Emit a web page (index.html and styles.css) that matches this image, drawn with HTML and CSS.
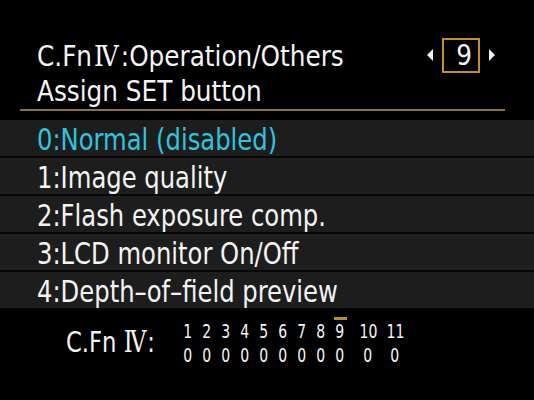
FILE: index.html
```html
<!DOCTYPE html>
<html lang="en">
<head>
  <meta charset="UTF-8">
  <title>C.Fn IV</title>
  <link rel="stylesheet" href="styles.css">
</head>
<body>

<div class="screen">
  <div class="head">
    <div class="head-text">
      <div class="line">C.Fn<span class="rn">Ⅳ</span>:Operation/Others</div>
      <div class="line">Assign SET button</div>
    </div>
    <div class="pager">
      <span class="arr arr-left"></span>
      <span class="num">9</span>
      <span class="arr arr-right"></span>
    </div>
  </div>
  <div class="rule"></div>

  <ul class="opts">
    <li class="sel"><span class="t">0:Normal (disabled)</span></li>
    <li><span class="t">1:Image quality</span></li>
    <li><span class="t">2:Flash exposure comp.</span></li>
    <li><span class="t">3:LCD monitor On/Off</span></li>
    <li><span class="t">4:Depth–of–field preview</span></li>
  </ul>

  <div class="summary">
    <span class="lbl"><span class="t">C.Fn <span class="rn">Ⅳ</span>:</span></span>
    <div class="cols">
      <div class="col"><span>1</span><span>0</span></div>
      <div class="col"><span>2</span><span>0</span></div>
      <div class="col"><span>3</span><span>0</span></div>
      <div class="col"><span>4</span><span>0</span></div>
      <div class="col"><span>5</span><span>0</span></div>
      <div class="col"><span>6</span><span>0</span></div>
      <div class="col"><span>7</span><span>0</span></div>
      <div class="col"><span>8</span><span>0</span></div>
      <div class="col cur"><span>9</span><span>0</span></div>
      <div class="col wide ten"><span>10</span><span>0</span></div>
      <div class="col wide"><span>11</span><span>0</span></div>
    </div>
  </div>
</div>

</body>
</html>
```

FILE: styles.css
```css
body {
  margin: 0;
  background: #000;
  font-family: "DejaVu Sans Condensed", "DejaVu Sans", sans-serif;
  color: #f4f4f4;
}
.screen {
  width: 534px;
  height: 400px;
  overflow: hidden;
  background: #000;
}
.rn {
  font-family: "DejaVu Serif Condensed", "DejaVu Serif", serif;
  margin: 0 2px;
}
.t {
  display: inline-block;
  white-space: nowrap;
  transform: scaleX(0.87);
  transform-origin: left center;
}
.head {
  display: flex;
  justify-content: space-between;
  padding: 38.5px 0 0 37px;
}
.line {
  font-size: 27.5px;
  line-height: 35px;
}
.pager {
  display: flex;
  align-items: center;
  height: 35px;
  margin: -1px 39px 0 0;
}
.num {
  box-sizing: border-box;
  width: 38px;
  height: 35px;
  border: 2px solid #c4921c;
  text-align: right;
  padding-right: 6px;
  font-size: 27.5px;
  line-height: 31px;
  margin: 0 9px;
}
.arr {
  width: 0;
  height: 0;
  border-top: 6.5px solid transparent;
  border-bottom: 6.5px solid transparent;
}
.arr-left {
  border-right: 6px solid #f4f4f4;
}
.arr-right {
  border-left: 6px solid #f4f4f4;
}
.rule {
  height: 2px;
  margin: 0 29px 0 20px;
  background: #8a7438;
}
.opts {
  list-style: none;
  margin: 9px 0 0 0;
  padding: 0;
}
.opts li {
  height: 33px;
  padding: 3px 0 0 37px;
  line-height: 33px;
  font-size: 31px;
  background: #1d1d1d;
  border-bottom: 2px solid #060606;
}
.opts li.sel {
  color: #2fc4de;
}
.summary {
  display: flex;
  align-items: flex-start;
  padding: 10.5px 0 0 66px;
}
.lbl {
  flex-shrink: 0;
  width: 116px;
  margin-top: 6.5px;
  font-size: 29px;
  line-height: 30px;
}
.lbl .rn {
  margin: 0 1px 0 0;
}
.cols {
  display: flex;
  gap: 7px;
}
.col {
  position: relative;
  display: flex;
  flex-direction: column;
  align-items: center;
  width: 12px;
  font-size: 20px;
  line-height: 23.5px;
}
.col span {
  transform: scaleX(0.78);
}
.col.wide {
  width: 20px;
}
.col.ten {
  margin-left: 5px;
}
.col.cur::before {
  content: "";
  position: absolute;
  top: -3px;
  left: 0;
  width: 13px;
  height: 2.5px;
  background: #b8902a;
}
```
